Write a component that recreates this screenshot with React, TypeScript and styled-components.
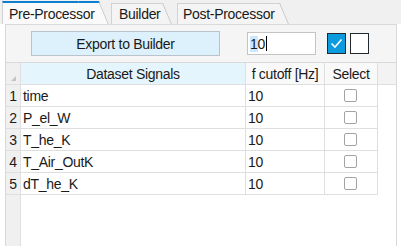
import React from 'react';
import styled, { createGlobalStyle } from 'styled-components';

const GlobalStyle = createGlobalStyle`
  html, body {
    margin: 0;
    padding: 0;
    background: #ffffff;
  }
  body {
    font-family: "Liberation Sans", Arial, sans-serif;
    font-size: 14px;
    letter-spacing: -0.3px;
    color: #1a1a1a;
  }
`;

const Window = styled.div`
  width: 401px;
  height: 246px;
  overflow: hidden;
  display: flex;
  flex-direction: column;
  background: #ffffff;
`;

const TabBar = styled.div`
  flex: none;
  height: 24px;
  display: flex;
  align-items: flex-end;
  padding-left: 2px;
  background: #f0f0f0;
`;

const Tab = styled.div<{ $active?: boolean; $w: number; $pl: number; $gap: number }>`
  position: relative;
  z-index: 0;
  box-sizing: border-box;
  width: ${p => p.$w}px;
  height: ${p => (p.$active ? 23 : 21)}px;
  padding-left: ${p => p.$pl}px;
  margin-right: ${p => p.$gap}px;
  display: flex;
  align-items: center;
  white-space: nowrap;
  background: ${p => (p.$active ? '#fafafa' : '#f4f4f4')};
  border-top: ${p => (p.$active ? '2px solid #0f7fd0' : '1px solid #d2d2d2')};
  border-left: 1px solid #d2d2d2;
  &::after {
    content: '';
    position: absolute;
    z-index: -1;
    top: ${p => (p.$active ? -2 : -1)}px;
    bottom: 0;
    right: 0;
    width: 20px;
    background: inherit;
    border-top: inherit;
    border-right: 1px solid #c9c9c9;
    transform: skewX(23deg);
    transform-origin: top;
  }
`;

const Pane = styled.div`
  flex: 1;
  min-height: 0;
  margin: 0 4px 0 5px;
  border: 1px solid #d9d9d9;
  border-bottom: none;
  background: #f5f5f5;
  display: flex;
  flex-direction: column;
`;

const Toolbar = styled.div`
  flex: none;
  height: 37px;
  display: flex;
  align-items: center;
  padding-left: 25px;
`;

const ExportButton = styled.div`
  box-sizing: border-box;
  width: 189px;
  height: 25px;
  display: flex;
  align-items: center;
  justify-content: center;
  background: #dcf1fb;
  border: 1px solid #b9c3c9;
`;

const CutoffInput = styled.div`
  box-sizing: border-box;
  width: 69px;
  height: 23px;
  margin-left: 27px;
  padding-left: 2px;
  display: flex;
  align-items: center;
  background: #ffffff;
  border: 1px solid #c4c4c4;
`;

const Selected = styled.span`
  background: #cce8ff;
`;

const Caret = styled.span`
  display: inline-block;
  width: 1px;
  height: 15px;
  margin-left: 1px;
  background: #000;
`;

const BigCheck = styled.div<{ $checked?: boolean; $ml: number }>`
  box-sizing: border-box;
  width: 19px;
  height: 21px;
  margin-left: ${p => p.$ml}px;
  display: flex;
  align-items: center;
  justify-content: center;
  background: ${p => (p.$checked ? '#0c9bdc' : '#ffffff')};
  border: 1px solid #222a30;
`;

const Grid = styled.div`
  flex: 1;
  min-height: 0;
  display: grid;
  grid-template-columns: 15px 225px 79px 53px 1fr;
  grid-template-rows: 22px repeat(5, 22px) 1fr;
  background: #ffffff;
  border-top: 1px solid #d9d9d9;
`;

const Cell = styled.div<{ $bg?: string; $align?: 'left' | 'center'; $last?: boolean; $noBottom?: boolean }>`
  box-sizing: border-box;
  display: flex;
  align-items: center;
  justify-content: ${p => (p.$align === 'center' ? 'center' : 'flex-start')};
  padding-left: ${p => (p.$align === 'center' ? 0 : 2)}px;
  background: ${p => p.$bg ?? '#ffffff'};
  border-right: ${p => (p.$last ? 'none' : '1px solid #dfdfdf')};
  border-bottom: ${p => (p.$noBottom ? 'none' : '1px solid #dfdfdf')};
  white-space: nowrap;
  overflow: hidden;
`;

const CornerCell = styled(Cell)`
  align-items: flex-end;
  justify-content: center;
  padding: 0 0 3px 0;
`;

const Filler = styled.div`
  grid-column: 2 / -1;
  background: #ffffff;
`;

const SmallCheck = styled.div`
  box-sizing: border-box;
  width: 13px;
  height: 13px;
  margin-left: -1px;
  border: 1px solid #a3a3a3;
  border-radius: 2px;
  background: #ffffff;
`;

const signals = ['time', 'P_el_W', 'T_he_K', 'T_Air_OutK', 'dT_he_K'];

export default function App() {
  return (
    <Window>
      <GlobalStyle />
      <TabBar>
        <Tab $active $w={97} $pl={6} $gap={12}>Pre-Processor</Tab>
        <Tab $w={52} $pl={7} $gap={14}>Builder</Tab>
        <Tab $w={103} $pl={5} $gap={0}>Post-Processor</Tab>
      </TabBar>
      <Pane>
        <Toolbar>
          <ExportButton>Export to Builder</ExportButton>
          <CutoffInput>
            <Selected>1</Selected>0<Caret />
          </CutoffInput>
          <BigCheck $checked $ml={11}>
            <svg width="13" height="11" viewBox="0 0 13 11">
              <polyline points="1.5,5.5 5,9 11.5,1.5" fill="none" stroke="#ffffff" strokeWidth="1.6" />
            </svg>
          </BigCheck>
          <BigCheck $ml={4} />
        </Toolbar>
        <Grid>
          <CornerCell $bg="#f0f0f0">
            <svg width="5" height="5" viewBox="0 0 5 5">
              <polygon points="5,0 5,5 0,5" fill="#c4c4c4" />
            </svg>
          </CornerCell>
          <Cell $bg="#e4f5fd" $align="center">Dataset Signals</Cell>
          <Cell $bg="#f9f9f9" $align="center">f cutoff [Hz]</Cell>
          <Cell $bg="#f9f9f9" $align="center">Select</Cell>
          <Cell $bg="#f3f3f3" $last />
          {signals.map((s, i) => (
            <React.Fragment key={s}>
              <Cell $bg="#f0f0f0" $align="center">{i + 1}</Cell>
              <Cell>{s}</Cell>
              <Cell>10</Cell>
              <Cell $align="center"><SmallCheck /></Cell>
              <Cell $last $noBottom />
            </React.Fragment>
          ))}
          <Cell $bg="#f0f0f0" $noBottom />
          <Filler />
        </Grid>
      </Pane>
    </Window>
  );
}
